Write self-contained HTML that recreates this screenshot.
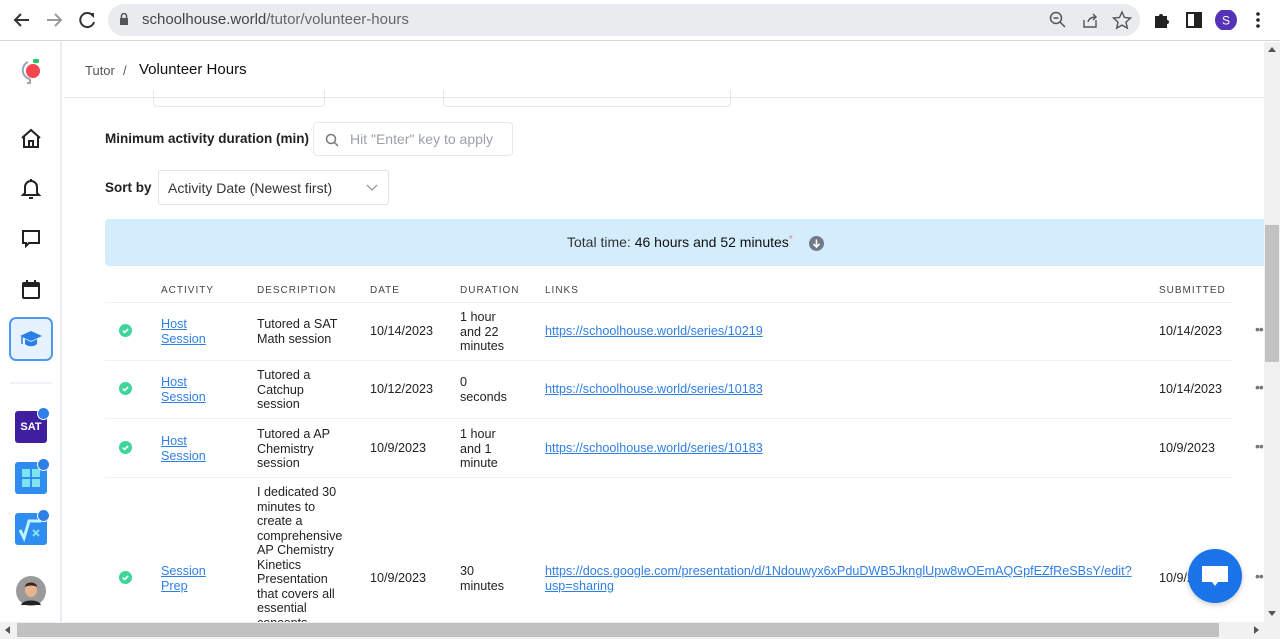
<!DOCTYPE html>
<html><head><meta charset="utf-8"><style>
*{box-sizing:border-box;margin:0;padding:0}
body{width:1280px;height:639px;overflow:hidden;background:#fff;font-family:"Liberation Sans",sans-serif;color:#1f2328;position:relative}
.abs{position:absolute}
.chrome{left:0;top:0;width:1280px;height:41px;background:#fff;border-bottom:1px solid #d5d7da}
.url{left:108px;top:4px;width:1032px;height:32px;border-radius:16px;background:#e9ebee}
.side{left:0;top:42px;width:62px;height:580px;border-right:2px solid #e8eef5;background:#fff}
.t{font-size:12.6px;line-height:14.5px;color:#222}
.h{font-size:10px;letter-spacing:1px;color:#444}
a{color:#2f7fe8;text-decoration:underline}
.line{height:1px;background:#eef1f5;left:105px;width:1127px}
.chk{width:13px;height:13px;border-radius:50%;background:#3ed598}
.dots{font-size:14px;color:#777;letter-spacing:-1px}
.lbl{font-size:13.5px;font-weight:bold;color:#222}
</style></head><body>
<div class="abs chrome"></div>
<svg class="abs" style="left:12px;top:10px" width="90" height="20" viewBox="0 0 90 20">
<path d="M17 10H3M9 4l-6 6 6 6" stroke="#333" stroke-width="2" fill="none"/>
<path d="M35 10H49M43 4l6 6-6 6" stroke="#999" stroke-width="2" fill="none"/>
<path d="M81 6a7 7 0 1 0 1 6" stroke="#333" stroke-width="2" fill="none"/><path d="M77 3h5v5z" fill="#333"/>
</svg>
<div class="abs url"></div>
<svg class="abs" style="left:119px;top:13px" width="10" height="13"><rect x="1" y="5" width="8" height="7" fill="#555"/><path d="M2.5 5V3a2.5 2.5 0 0 1 5 0v2" stroke="#555" stroke-width="1.5" fill="none"/></svg>
<div class="abs" style="left:142px;top:11px;font-size:15px;color:#444">schoolhouse.world<span style="color:#666">/tutor/volunteer-hours</span></div>
<svg class="abs" style="left:1048px;top:10px" width="90" height="20"><circle cx="8" cy="8" r="5.5" stroke="#555" stroke-width="1.5" fill="none"/><path d="M12 12l5 5M5.5 8h5" stroke="#555" stroke-width="1.5"/><path d="M36 10v7h12v-7M40 12c1-4 4-5 8-5M45 4l3 3-3 3" stroke="#555" stroke-width="1.4" fill="none"/><path d="M74 2l2.5 5.5 6 .6-4.5 4 1.3 6-5.3-3-5.3 3 1.3-6-4.5-4 6-.6z" stroke="#555" stroke-width="1.4" fill="none"/></svg>
<svg class="abs" style="left:1152px;top:10px" width="110" height="20"><path d="M3 6h4a2 2 0 1 1 4 0h4v4a2 2 0 1 1 0 4v4H3z" fill="#222"/><rect x="35" y="3" width="14" height="14" fill="none" stroke="#222" stroke-width="2"/><rect x="42" y="3" width="7" height="14" fill="#222"/><circle cx="74" cy="10" r="11" fill="#5533b8"/><text x="74" y="14.5" font-size="12" fill="#fff" text-anchor="middle" font-family="Liberation Sans">S</text><circle cx="106" cy="4" r="1.8" fill="#222"/><circle cx="106" cy="10" r="1.8" fill="#222"/><circle cx="106" cy="16" r="1.8" fill="#222"/></svg>

<div class="abs side"></div>
<svg class="abs" style="left:18px;top:56px" width="26" height="30"><path d="M10 6a9 9 0 0 0 2 17" stroke="#9aa4b2" stroke-width="2" fill="none"/><path d="M12 23v4h-3" stroke="#9aa4b2" stroke-width="2" fill="none"/><circle cx="15" cy="15" r="7" fill="#f5454f"/><rect x="15" y="3" width="6" height="4" rx="1.5" fill="#27c667"/></svg>
<svg class="abs" style="left:20px;top:128px" width="22" height="22" fill="none" stroke="#222" stroke-width="2"><path d="M2 10L11 2l9 8M4 8v11h14V8M9 19v-6h4v6"/></svg>
<svg class="abs" style="left:21px;top:178px" width="20" height="22" fill="none" stroke="#222" stroke-width="2"><path d="M4 15V9a6 6 0 0 1 12 0v6l2 2H2zM8 20h4M10 1v2"/></svg>
<svg class="abs" style="left:21px;top:229px" width="20" height="20" fill="none" stroke="#222" stroke-width="2"><path d="M2 2h16v12H8l-3 3v-3H2z"/></svg>
<svg class="abs" style="left:22px;top:279px" width="18" height="20"><rect x="1" y="4" width="16" height="15" rx="1" fill="none" stroke="#222" stroke-width="2"/><rect x="1" y="4" width="16" height="4" fill="#222"/><path d="M5 1v4M13 1v4" stroke="#222" stroke-width="2"/></svg>
<div class="abs" style="left:9px;top:317px;width:44px;height:44px;border:2px solid #4c9af0;border-radius:7px;background:#e6f2ff"></div>
<svg class="abs" style="left:19px;top:329px" width="24" height="20"><path d="M12 2L1 7l11 5 11-5z" fill="#2a7fe6"/><path d="M6 10v5c3 3 9 3 12 0v-5l-6 3z" fill="#2a7fe6"/><path d="M3 8v7" stroke="#2a7fe6" stroke-width="1.5"/></svg>
<div class="abs" style="left:10px;top:382px;width:42px;height:2px;background:#eef1f5"></div>
<div class="abs" style="left:15px;top:411px;width:32px;height:32px;border-radius:3px;background:#3f1fa0;color:#fff;font-size:11px;font-weight:bold;text-align:center;line-height:32px">SAT</div>
<div class="abs" style="left:15px;top:462px;width:32px;height:32px;border-radius:3px;background:#2f8cf0"></div>
<svg class="abs" style="left:22px;top:469px" width="18" height="18"><rect x="0" y="0" width="8" height="8" fill="#7fe3f0"/><rect x="10" y="0" width="8" height="8" fill="#7fe3f0"/><rect x="0" y="10" width="8" height="8" fill="#7fe3f0"/><rect x="10" y="10" width="8" height="8" fill="#7fe3f0"/></svg>
<div class="abs" style="left:15px;top:513px;width:32px;height:32px;border-radius:3px;background:#2f8cf0"></div>
<svg class="abs" style="left:18px;top:518px" width="26" height="24"><path d="M2 12l4 8 5-17h12" stroke="#bff4ff" stroke-width="3" fill="none"/><path d="M15 12l6 6M21 12l-6 6" stroke="#7fe3f0" stroke-width="2"/></svg>
<div class="abs" style="left:37px;top:407px;width:13px;height:13px;border-radius:50%;background:#2f7fe8;border:1.5px solid #fff"></div>
<div class="abs" style="left:37px;top:458px;width:13px;height:13px;border-radius:50%;background:#2f7fe8;border:1.5px solid #fff"></div>
<div class="abs" style="left:37px;top:509px;width:13px;height:13px;border-radius:50%;background:#2f7fe8;border:1.5px solid #fff"></div>
<svg class="abs" style="left:16px;top:576px" width="30" height="30"><circle cx="15" cy="15" r="15" fill="#9a9a9a"/><path d="M5 29c2-6 18-6 20 0" fill="#222"/><ellipse cx="15" cy="14" rx="6" ry="7" fill="#e8b48f"/><path d="M9 11c0-6 12-6 12 0c-3-2-9-2-12 0z" fill="#3a2418"/></svg>

<div class="abs" style="left:64px;top:42px;width:1200px;height:56px;border-bottom:1px solid #e3e9f0"></div>
<div class="abs" style="left:85px;top:63px;font-size:13px;color:#555">Tutor</div>
<div class="abs" style="left:123px;top:63px;font-size:13px;color:#555">/</div>
<div class="abs" style="left:139px;top:61px;font-size:15px;color:#111">Volunteer Hours</div>
<div class="abs" style="left:153px;top:90px;width:172px;height:17px;border:1px solid #e3e6ea;border-top:none;border-radius:0 0 4px 4px"></div>
<div class="abs" style="left:443px;top:90px;width:288px;height:17px;border:1px solid #e3e6ea;border-top:none;border-radius:0 0 4px 4px"></div>

<div class="abs lbl" style="left:105px;top:131px">Minimum activity duration (min)</div>
<div class="abs" style="left:313px;top:122px;width:200px;height:34px;border:1px solid #e6e8eb;border-radius:4px"></div>
<svg class="abs" style="left:325px;top:133px" width="14" height="14" fill="none" stroke="#777" stroke-width="1.5"><circle cx="6" cy="6" r="4.5"/><path d="M9.5 9.5l3.5 3.5"/></svg>
<div class="abs" style="left:350px;top:131px;font-size:14px;color:#9aa0a6">Hit "Enter" key to apply</div>
<div class="abs lbl" style="left:105px;top:180px">Sort by</div>
<div class="abs" style="left:158px;top:170px;width:231px;height:35px;border:1px solid #dfe2e6;border-radius:3px"></div>
<div class="abs" style="left:168px;top:180px;font-size:14px;color:#333">Activity Date (Newest first)</div>
<svg class="abs" style="left:366px;top:184px" width="12" height="8" fill="none" stroke="#999" stroke-width="1.3"><path d="M1 1l5 5 5-5"/></svg>

<div class="abs" style="left:105px;top:219px;width:1159px;height:47px;background:#d4edfc;border-radius:4px 0 0 4px"></div>
<div class="abs" style="left:567px;top:234px;font-size:14px;color:#333">Total time: <span style="color:#111">46 hours and 52 minutes</span><span style="color:#f07a8a;font-size:10px;vertical-align:top">*</span></div>
<svg class="abs" style="left:809px;top:236px" width="15" height="15"><circle cx="7.5" cy="7.5" r="7.5" fill="#737a87"/><path d="M7.5 3.5v7M4.5 8l3 3 3-3" stroke="#fff" stroke-width="1.6" fill="none"/></svg>

<div class="abs h" style="left:161px;top:285px">ACTIVITY</div>
<div class="abs h" style="left:257px;top:285px">DESCRIPTION</div>
<div class="abs h" style="left:370px;top:285px">DATE</div>
<div class="abs h" style="left:460px;top:285px">DURATION</div>
<div class="abs h" style="left:545px;top:285px">LINKS</div>
<div class="abs h" style="left:1159px;top:285px">SUBMITTED</div>
<div class="abs line" style="top:302px"></div>
<div class="abs line" style="top:360px"></div>
<div class="abs line" style="top:418px"></div>
<div class="abs line" style="top:477px"></div>

<svg width="0" height="0" style="position:absolute"><defs><symbol id="ck" viewBox="0 0 13 13"><circle cx="6.5" cy="6.5" r="6.5" fill="#3ed598"/><path d="M3.8 6.7l1.8 1.8 3.6-3.6" stroke="#fff" stroke-width="1.6" fill="none"/></symbol></defs></svg>
<svg class="abs" style="left:119px;top:324px" width="13" height="13"><use href="#ck"/></svg>
<div class="abs t" style="left:161px;top:317px"><a>Host<br>Session</a></div>
<div class="abs t" style="left:257px;top:317px">Tutored a SAT<br>Math session</div>
<div class="abs t" style="left:370px;top:324px">10/14/2023</div>
<div class="abs t" style="left:460px;top:310px">1 hour<br>and 22<br>minutes</div>
<div class="abs t" style="left:545px;top:324px"><a>https://schoolhouse.world/series/10219</a></div>
<div class="abs t" style="left:1159px;top:324px">10/14/2023</div>
<div class="abs dots" style="left:1255px;top:321px">••</div>

<svg class="abs" style="left:119px;top:382px" width="13" height="13"><use href="#ck"/></svg>
<div class="abs t" style="left:161px;top:375px"><a>Host<br>Session</a></div>
<div class="abs t" style="left:257px;top:368px">Tutored a<br>Catchup<br>session</div>
<div class="abs t" style="left:370px;top:382px">10/12/2023</div>
<div class="abs t" style="left:460px;top:375px">0<br>seconds</div>
<div class="abs t" style="left:545px;top:382px"><a>https://schoolhouse.world/series/10183</a></div>
<div class="abs t" style="left:1159px;top:382px">10/14/2023</div>
<div class="abs dots" style="left:1255px;top:379px">••</div>

<svg class="abs" style="left:119px;top:441px" width="13" height="13"><use href="#ck"/></svg>
<div class="abs t" style="left:161px;top:434px"><a>Host<br>Session</a></div>
<div class="abs t" style="left:257px;top:427px">Tutored a AP<br>Chemistry<br>session</div>
<div class="abs t" style="left:370px;top:441px">10/9/2023</div>
<div class="abs t" style="left:460px;top:427px">1 hour<br>and 1<br>minute</div>
<div class="abs t" style="left:545px;top:441px"><a>https://schoolhouse.world/series/10183</a></div>
<div class="abs t" style="left:1159px;top:441px">10/9/2023</div>
<div class="abs dots" style="left:1255px;top:438px">••</div>

<svg class="abs" style="left:119px;top:571px" width="13" height="13"><use href="#ck"/></svg>
<div class="abs t" style="left:161px;top:564px"><a>Session<br>Prep</a></div>
<div class="abs t" style="left:257px;top:485px">I dedicated 30<br>minutes to<br>create a<br>comprehensive<br>AP Chemistry<br>Kinetics<br>Presentation<br>that covers all<br>essential<br>concepts</div>
<div class="abs t" style="left:370px;top:571px">10/9/2023</div>
<div class="abs t" style="left:460px;top:564px">30<br>minutes</div>
<div class="abs t" style="left:545px;top:564px"><a>https://docs.google.com/presentation/d/1Ndouwyx6xPduDWB5JknglUpw8wOEmAQGpfEZfReSBsY/edit?<br>usp=sharing</a></div>
<div class="abs t" style="left:1159px;top:571px">10/9/2023</div>
<div class="abs dots" style="left:1255px;top:568px">••</div>

<div class="abs" style="left:1188px;top:549px;width:54px;height:54px;border-radius:50%;background:#1a73e8;box-shadow:0 2px 6px rgba(0,0,0,.2)"></div>
<svg class="abs" style="left:1200px;top:564px" width="30" height="24"><path d="M2 2h26v16H18l-3 4-3-4H2z" fill="#fff"/></svg>

<div class="abs" style="left:1264px;top:42px;width:16px;height:580px;background:#f1f1f1"></div>
<div class="abs" style="left:1265px;top:225px;width:14px;height:137px;background:#c1c1c1"></div>
<div class="abs" style="left:1268px;top:47px;border:4px solid transparent;border-bottom:5px solid #555;border-top:none"></div>
<div class="abs" style="left:1268px;top:611px;border:4px solid transparent;border-top:5px solid #555;border-bottom:none"></div>
<div class="abs" style="left:0;top:622px;width:1280px;height:17px;background:#f1f1f1"></div>
<div class="abs" style="left:17px;top:623px;width:1202px;height:14px;background:#c1c1c1"></div>
<div class="abs" style="left:5px;top:626px;border:4px solid transparent;border-right:5px solid #555;border-left:none"></div>
<div class="abs" style="left:1254px;top:626px;border:4px solid transparent;border-left:5px solid #555;border-right:none"></div>
</body></html>
